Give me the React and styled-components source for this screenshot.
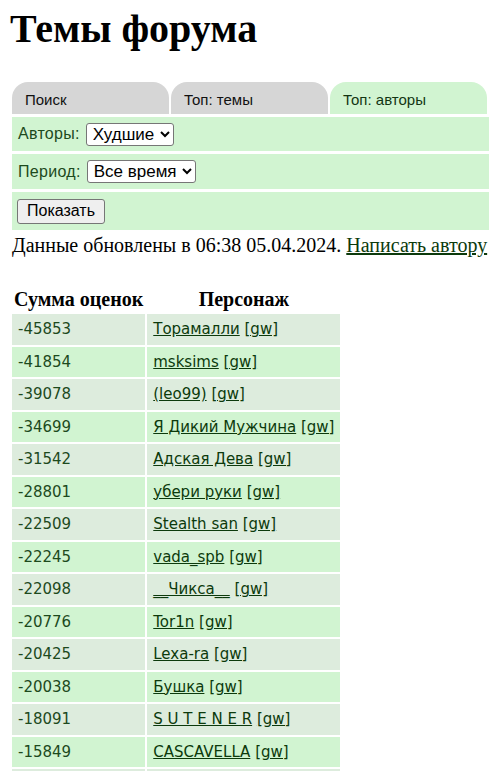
import styled, { createGlobalStyle } from "styled-components";

const authors = [
	["-45853", "Торамалли"],
	["-41854", "msksims"],
	["-39078", "(leo99)"],
	["-34699", "Я Дикий Мужчина"],
	["-31542", "Адская Дева"],
	["-28801", "убери руки"],
	["-22509", "Stealth san"],
	["-22245", "vada_spb"],
	["-22098", "__Чикса__"],
	["-20776", "Tor1n"],
	["-20425", "Lexa-ra"],
	["-20038", "Бушка"],
	["-18091", "S U T E N E R"],
	["-15849", "CASCAVELLA"],
];

function App() {
	return (
		<Page>
			<GlobalStyle />
			<Title>Темы форума</Title>
			<Tabs>
				<Tab>Поиск</Tab>
				<Tab>Топ: темы</Tab>
				<Tab $active>Топ: авторы</Tab>
			</Tabs>
			<Filters>
				<FilterRow $h={34}>
					<Label>Авторы:</Label>
					<Select defaultValue="worst">
						<option value="best">Лучшие</option>
						<option value="worst">Худшие</option>
					</Select>
				</FilterRow>
				<FilterRow $h={35}>
					<Label>Период:</Label>
					<Select defaultValue="all">
						<option value="all">Все время</option>
						<option value="month">Месяц</option>
						<option value="week">Неделя</option>
					</Select>
				</FilterRow>
				<FilterRow $h={38}>
					<ShowButton>Показать</ShowButton>
				</FilterRow>
			</Filters>
			<Updated>
				Данные обновлены в 06:38 05.04.2024. <DarkLink href="#">Написать автору</DarkLink>
			</Updated>
			<Rating>
				<thead>
					<tr>
						<Head>Сумма оценок</Head>
						<Head>Персонаж</Head>
					</tr>
				</thead>
				<tbody>
					{authors.map(([score, name], i) => (
						<Row key={name} $odd={i % 2 === 0}>
							<Cell>{score}</Cell>
							<Cell>
								<CellLink href="#">{name}</CellLink> <CellLink href="#">[gw]</CellLink>
							</Cell>
						</Row>
					))}
					{/* next row, below the fold */}
					<Row $odd>
						<Cell />
						<Cell />
					</Row>
				</tbody>
			</Rating>
		</Page>
	);
}
export default App;

const GlobalStyle = createGlobalStyle`
	body {
		margin: 0;
		background: #fff;
		font-family: "Liberation Serif", "Times New Roman", serif;
		color: #000;
	}
`;

const Page = styled.div`
	padding: 0 11px 0 10px;
	height: 771px;
	overflow: hidden;
`;

const Title = styled.h1`
	margin: 6px 0 30px;
	font-size: 40px;
	line-height: 46px;
	font-weight: bold;
`;

const Tabs = styled.div`
	display: grid;
	grid-template-columns: repeat(3, 1fr);
	gap: 2px;
	width: 475px;
	margin: 0 2px;
`;

const Tab = styled.div`
	display: flex;
	align-items: center;
	height: 32px;
	padding: 2px 0 0 13px;
	box-sizing: border-box;
	border-radius: 16px 16px 0 0;
	background: ${(p) => (p.$active ? "#d1f4d1" : "#d6d6d6")};
	font-family: "Liberation Sans", Arial, sans-serif;
	font-size: 15px;
	color: ${(p) => (p.$active ? "#133613" : "#111")};
`;

const Filters = styled.div`
	display: flex;
	flex-direction: column;
	gap: 3px;
	margin: 3px 2px 0;
`;

const FilterRow = styled.div`
	display: flex;
	align-items: center;
	gap: 6px;
	height: ${(p) => p.$h}px;
	padding: 0 5px;
	background: #d1f4d1;
	font-family: "Liberation Sans", Arial, sans-serif;
`;

const Label = styled.span`
	font-size: 16px;
	color: #1d4a1d;
	padding-left: 1px;
	letter-spacing: 0.3px;
`;

const Select = styled.select`
	height: 23px;
	padding: 0 2px;
	border: 1px solid #767676;
	border-radius: 3px;
	background: #fff;
	font-family: "Liberation Sans", Arial, sans-serif;
	font-size: 17px;
	color: #000;
`;

const ShowButton = styled.button`
	height: 25px;
	padding: 0 9px;
	border: 1px solid #767676;
	border-radius: 3px;
	background: #efefef;
	font-family: "Liberation Sans", Arial, sans-serif;
	font-size: 16px;
	color: #000;
`;

const Updated = styled.p`
	margin: 4px 2px 0;
	font-size: 20px;
	line-height: 23px;
	white-space: nowrap;
`;

const DarkLink = styled.a`
	color: #0c3a0c;
`;

const Rating = styled.table`
	margin-top: 28px;
	border-spacing: 2px;
`;

const Head = styled.th`
	height: 24px;
	padding: 0 2px 1px;
	font-size: 20px;
	font-weight: bold;
	text-align: center;
	vertical-align: bottom;
	white-space: nowrap;
`;

const Row = styled.tr`
	background: ${(p) => (p.$odd ? "#ddecdd" : "#d1f4d1")};
`;

const Cell = styled.td`
	height: 30.5px;
	padding: 0 6px;
	font-family: "DejaVu Sans", Verdana, sans-serif;
	font-size: 15px;
	color: #1d4a1d;
	white-space: nowrap;
	vertical-align: middle;
`;

const CellLink = styled.a`
	color: #0c3a0c;
`;
